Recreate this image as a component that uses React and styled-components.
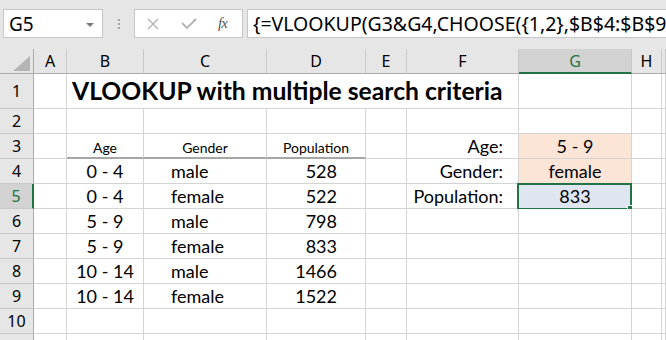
import React from 'react';
import styled, { createGlobalStyle, css } from 'styled-components';

const GlobalStyle = createGlobalStyle`
  html, body {
    margin: 0;
    padding: 0;
    background: #fff;
    overflow: hidden;
  }
`;

const UI_FONT = `"Noto Sans", "Open Sans", sans-serif`;
const CELL_FONT = `Lato, "Liberation Sans", sans-serif`;
const GREEN = '#217346';

const Page = styled.div`
  width: 666px;
  height: 340px;
  overflow: hidden;
  background: #fff;
`;

const Toolbar = styled.div`
  height: 49px;
  box-sizing: border-box;
  padding-top: 9px;
  background: #e6e6e6;
  display: flex;
  align-items: flex-start;
`;

const NameBox = styled.div`
  margin-left: 3px;
  width: 100px;
  height: 29px;
  box-sizing: border-box;
  background: #fff;
  border: 1px solid #c6c6c6;
  display: flex;
  align-items: center;
  justify-content: space-between;
  padding: 0 8px 0 5px;
  font-family: ${UI_FONT};
  font-size: 19px;
  color: #000;
`;

const DropArrow = styled.span`
  width: 0;
  height: 0;
  border-left: 4px solid transparent;
  border-right: 4px solid transparent;
  border-top: 4px solid #7a7a7a;
  margin-top: 2px;
`;

const Divider = styled.div`
  width: 31px;
  height: 29px;
  display: flex;
  flex-direction: column;
  align-items: center;
  justify-content: center;
  gap: 2px;
  span {
    width: 2px;
    height: 2px;
    background: #a6a6a6;
  }
`;

const FxBox = styled.div`
  width: 109px;
  height: 29px;
  box-sizing: border-box;
  background: #fff;
  border: 1px solid #c6c6c6;
  display: flex;
  align-items: center;
  padding-left: 12px;
  margin-right: 4px;
`;

const FxText = styled.span`
  font-family: "Liberation Serif", serif;
  font-style: italic;
  font-size: 15px;
  color: #555;
  margin-left: 21px;
  letter-spacing: -1px;
`;

const FormulaInput = styled.div`
  flex: 1;
  height: 29px;
  margin-right: -4px;
  box-sizing: border-box;
  background: #fff;
  border: 1px solid #c6c6c6;
  display: flex;
  align-items: center;
  padding-left: 5px;
  font-family: ${UI_FONT};
  font-size: 19.5px;
  color: #000;
  white-space: nowrap;
  overflow: hidden;
`;

const Sheet = styled.div`
  display: grid;
  grid-template-columns: 34px 33px 77px 123px 99px 41px 112px 113px 30px 1fr;
  grid-template-rows: 25px 35px repeat(10, 25px);
`;

const headerBase = css`
  box-sizing: border-box;
  background: #e6e6e6;
  font-family: ${UI_FONT};
  font-size: 16px;
  color: #000;
  display: flex;
  align-items: center;
  justify-content: center;
`;

const Corner = styled.div`
  ${headerBase};
  border-right: 1px solid #ababab;
  border-bottom: 1px solid #ababab;
  align-items: flex-end;
  justify-content: flex-end;
  padding: 0 3px 2px 0;
`;

const ColHeader = styled.div`
  ${headerBase};
  border-right: 1px solid #c8c8c8;
  border-bottom: ${p => (p.$active ? `2px solid ${GREEN}` : '1px solid #ababab')};
  ${p => p.$active && css`
    background: #d2d2d2;
    color: ${GREEN};
  `}
`;

const RowHeader = styled.div`
  ${headerBase};
  border-right: ${p => (p.$active ? `2px solid ${GREEN}` : '1px solid #ababab')};
  border-bottom: 1px solid #c8c8c8;
  ${p => p.$active && css`
    background: #d2d2d2;
    color: ${GREEN};
  `}
`;

const Cell = styled.div`
  position: relative;
  box-sizing: border-box;
  border-right: 1px solid #d4d4d4;
  border-bottom: ${p => (p.$thick ? '2px solid #a6a6a6' : '1px solid #d4d4d4')};
  background: ${p => p.$fill || '#fff'};
  display: flex;
  align-items: flex-end;
  justify-content: ${p => ({ left: 'flex-start', center: 'center', right: 'flex-end' }[p.$align || 'left'])};
  padding: 0 ${p => p.$padR || 0}px ${p => (p.$thick ? 2 : 3)}px ${p => p.$padL || 0}px;
  font-family: ${CELL_FONT};
  font-size: ${p => p.$size || 18}px;
  line-height: 1;
  color: #000;
  white-space: nowrap;
  grid-column: ${p => (p.$span ? `span ${p.$span}` : 'auto')};
`;

const Title = styled(Cell)`
  font-weight: 700;
  font-size: 24.7px;
  padding-left: 5px;
  padding-bottom: 4px;
`;

const Selection = styled.div`
  position: absolute;
  top: -1px;
  left: -2px;
  right: -1px;
  bottom: -2px;
  border: 2px solid ${GREEN};
  pointer-events: none;
`;

const FillHandle = styled.div`
  position: absolute;
  right: -5px;
  bottom: -5px;
  width: 6px;
  height: 6px;
  background: ${GREEN};
  border: 1px solid #fff;
`;

const COLS = ['A', 'B', 'C', 'D', 'E', 'F', 'G', 'H', ''];

const DATA = [
  ['0 - 4', 'male', '528'],
  ['0 - 4', 'female', '522'],
  ['5 - 9', 'male', '798'],
  ['5 - 9', 'female', '833'],
  ['10 - 14', 'male', '1466'],
  ['10 - 14', 'female', '1522'],
];

const LOOKUP = {
  3: ['Age:', '5 - 9', '#fce4d6'],
  4: ['Gender:', 'female', '#fce4d6'],
  5: ['Population:', '833', '#dfe6f2'],
};

function Blank({ count }) {
  return Array.from({ length: count }, (_, i) => <Cell key={`b${i}`} />);
}

function renderRow(r) {
  const lookup = LOOKUP[r];
  let left;
  if (r === 1) {
    left = [
      <Cell key="a" />,
      <Title key="t" $span={5}>VLOOKUP with multiple search criteria</Title>,
    ];
  } else if (r === 3) {
    left = [
      <Cell key="a" />,
      <Cell key="b" $align="center" $size={14} $thick>Age</Cell>,
      <Cell key="c" $align="center" $size={14} $thick>Gender</Cell>,
      <Cell key="d" $align="center" $size={14} $thick>Population</Cell>,
      <Cell key="e" />,
    ];
  } else if (r >= 4 && r <= 9) {
    const [age, gender, pop] = DATA[r - 4];
    left = [
      <Cell key="a" />,
      <Cell key="b" $align="center">{age}</Cell>,
      <Cell key="c" $padL={27}>{gender}</Cell>,
      <Cell key="d" $align="right" $padR={28}>{pop}</Cell>,
      <Cell key="e" />,
    ];
  } else {
    left = [<Blank key="bl" count={5} />];
  }

  let right;
  if (r === 1) {
    right = [<Cell key="g" />, <Cell key="h" />, <Cell key="i" />];
  } else if (lookup) {
    right = [
      <Cell key="f" $align="right" $padR={15}>{lookup[0]}</Cell>,
      <Cell key="g" $align="center" $fill={lookup[2]}>
        {lookup[1]}
        {r === 5 && (
          <Selection>
            <FillHandle />
          </Selection>
        )}
      </Cell>,
      <Cell key="h" />,
      <Cell key="i" />,
    ];
  } else {
    right = [<Blank key="br" count={4} />];
  }

  return (
    <React.Fragment key={r}>
      <RowHeader $active={r === 5}>{r <= 10 ? r : ''}</RowHeader>
      {left}
      {right}
    </React.Fragment>
  );
}

export default function App() {
  return (
    <Page>
      <GlobalStyle />
      <Toolbar>
        <NameBox>
          G5
          <DropArrow />
        </NameBox>
        <Divider>
          <span />
          <span />
          <span />
        </Divider>
        <FxBox>
          <svg width="12" height="12" viewBox="0 0 12 12">
            <path d="M1 1 L11 11 M11 1 L1 11" stroke="#b3b3b3" strokeWidth="1.4" fill="none" />
          </svg>
          <svg width="16" height="11" viewBox="0 0 16 11" style={{ marginLeft: 22 }}>
            <path d="M1 5 L6 10 L15 1" stroke="#b3b3b3" strokeWidth="1.8" fill="none" />
          </svg>
          <FxText>fx</FxText>
        </FxBox>
        <FormulaInput>{'{=VLOOKUP(G3&G4,CHOOSE({1,2},$B$4:$B$9'}</FormulaInput>
      </Toolbar>
      <Sheet>
        <Corner>
          <svg width="17" height="15" viewBox="0 0 17 15">
            <polygon points="17,0 17,15 0,15" fill="#b4b4b4" />
          </svg>
        </Corner>
        {COLS.map((c, i) => (
          <ColHeader key={i} $active={c === 'G'}>{c}</ColHeader>
        ))}
        {Array.from({ length: 11 }, (_, i) => renderRow(i + 1))}
      </Sheet>
    </Page>
  );
}
